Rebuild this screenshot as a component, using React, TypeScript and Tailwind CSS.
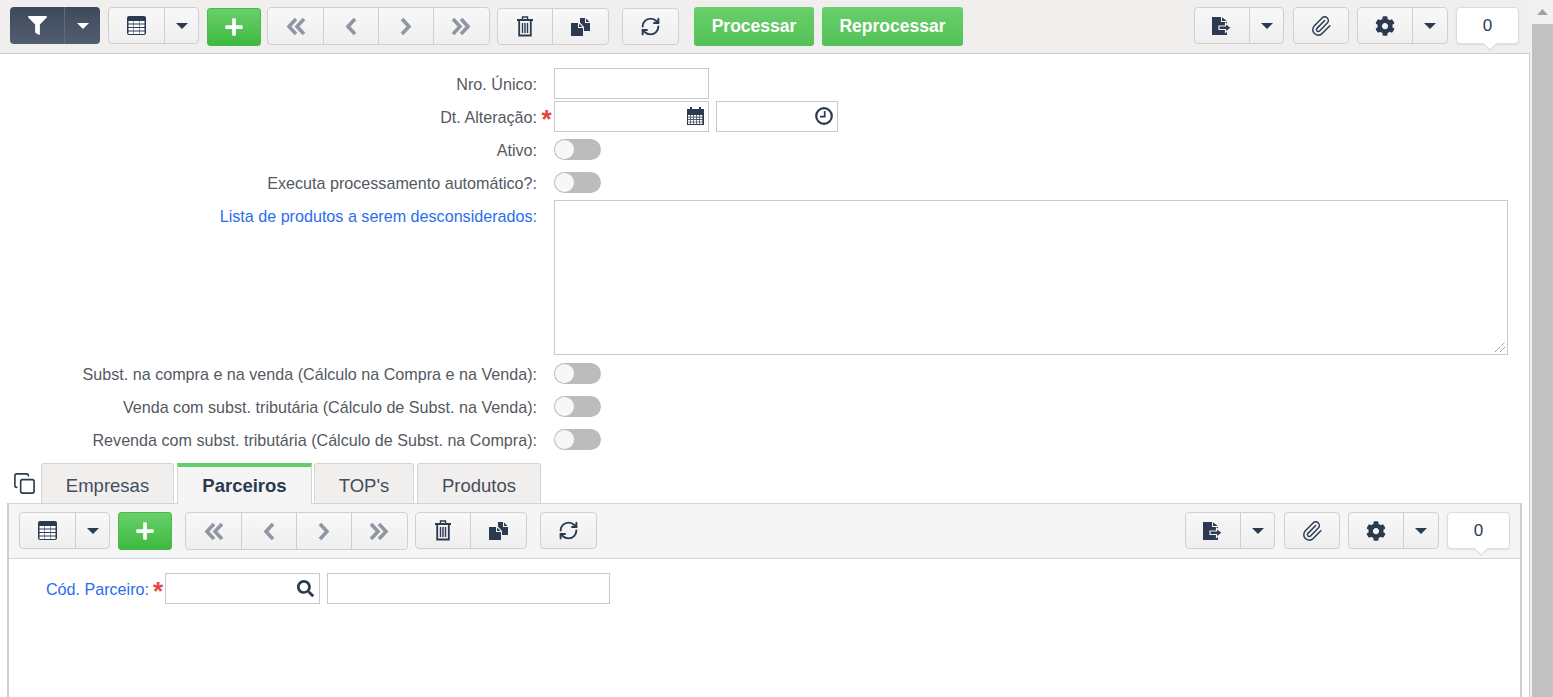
import type { ReactNode } from "react";
import { FaCog, FaFilter, FaPlus, FaSearch } from "react-icons/fa";
import { Copy, Paperclip, RefreshCw } from "lucide-react";

const navy = "#2b3a50";

function Caret({ color = navy }: { color?: string }) {
  return (
    <svg width="12" height="6" viewBox="0 0 12 6">
      <polygon points="0,0 12,0 6,6" fill={color} />
    </svg>
  );
}

function FilesIcon() {
  return (
    <svg width="19" height="18" viewBox="0 0 19 18" fill={navy}>
      <path d="M0 5h7v5h5v8H0z" />
      <path d="M8 5.5 11.5 9H8z" />
      <path d="M9 0h5v5h5v8h-6V9L9 4.5z" />
      <path d="M15 0.5 18.5 4H15z" />
    </svg>
  );
}

function TableIcon() {
  return (
    <svg width="19" height="19" viewBox="0 0 19 19">
      <rect x="0" y="0" width="19" height="19" rx="2" fill={navy} />
      {[5, 8.5, 12, 15.5].map((y) =>
        [1.5, 7, 12.5].map((x) => (
          <rect key={`${x}-${y}`} x={x} y={y} width="5" height="2.5" fill="#ffffff" />
        )),
      )}
    </svg>
  );
}

function TrashIcon() {
  return (
    <svg width="16" height="21" viewBox="0 0 16 21" fill="none" stroke={navy}>
      <path d="M5.5 3V1h5v2" strokeWidth="1.4" />
      <path d="M0 4h16" strokeWidth="2" />
      <path d="M2.2 5v14.5h11.6V5" strokeWidth="1.8" />
      <path d="M5.5 7v10M8 7v10M10.5 7v10" strokeWidth="1.4" />
    </svg>
  );
}

function ExportIcon() {
  return (
    <svg width="20" height="18" viewBox="0 0 20 18">
      <path d="M0 0h9v5h6v13H0z" fill={navy} />
      <path d="M10 0.3 14.7 4H10z" fill={navy} />
      <path d="M7 9h6.5V6.3l5.8 4.5-5.8 4.5v-2.8H7z" fill={navy} stroke="#f4f4f4" strokeWidth="1.2" />
    </svg>
  );
}

function CalendarIcon() {
  return (
    <svg className="-translate-y-px" width="17" height="18" viewBox="0 0 17 18">
      <path d="M0 2h3V0h2v2h7V0h2v2h3v5H0z" fill={navy} />
      <rect x="0" y="7" width="17" height="11" fill={navy} />
      {[8, 10.5, 13, 15.3].map((y) =>
        [1, 4, 7, 10, 13].map((x) => (
          <rect key={`${x}-${y}`} x={x} y={y} width="2.3" height="1.7" fill="#ffffff" />
        )),
      )}
    </svg>
  );
}

function ClockIcon() {
  return (
    <svg className="-translate-y-px" width="18" height="18" viewBox="0 0 18 18" fill="none" stroke={navy}>
      <circle cx="9" cy="9" r="7.8" strokeWidth="2.2" />
      <path d="M9.7 4v5.7H5" strokeWidth="1.7" />
    </svg>
  );
}

function Chevrons({ dir, double }: { dir: "left" | "right"; double?: boolean }) {
  const flip = dir === "right" ? "-scale-x-100" : "";
  return (
    <svg className={flip} width={double ? 21 : 14} height="19" viewBox={double ? "0 0 21 19" : "0 0 14 19"} fill="none" stroke="#8f97a3" strokeWidth="3.6">
      <path d="M11 2 4 9.5 11 17" />
      {double && <path d="M19 2 12 9.5 19 17" />}
    </svg>
  );
}

function Segment({ width, children }: { width: string; children: ReactNode }) {
  return (
    <div className={`flex h-full items-center justify-center border-r border-[#cfcfcf] last:border-r-0 ${width}`}>
      {children}
    </div>
  );
}

function Group({ className = "", children }: { className?: string; children: ReactNode }) {
  return (
    <div className={`flex h-[37px] items-center rounded-[4px] border border-[#d0d0d0] bg-gradient-to-b from-[#f8f8f8] to-[#efefef] ${className}`}>
      {children}
    </div>
  );
}

function PlusButton() {
  return (
    <div className="flex h-[38px] w-[54px] items-center justify-center rounded-[3px] border border-[#4cb84e] bg-gradient-to-b from-[#68cf6b] to-[#3cba3e]">
      <FaPlus size={20} color="#ffffff" />
    </div>
  );
}

function NavGroup() {
  return (
    <Group className="h-[38px]">
      <Segment width="w-[56px]"><Chevrons dir="left" double /></Segment>
      <Segment width="w-[55px]"><Chevrons dir="left" /></Segment>
      <Segment width="w-[55px]"><Chevrons dir="right" /></Segment>
      <Segment width="w-[55px]"><Chevrons dir="right" double /></Segment>
    </Group>
  );
}

function EditGroup() {
  return (
    <Group>
      <Segment width="w-[55px]"><TrashIcon /></Segment>
      <Segment width="w-[55px]"><FilesIcon /></Segment>
    </Group>
  );
}

function RefreshButton() {
  return (
    <Group className="w-[57px] justify-center">
      <RefreshCw size={21} color={navy} strokeWidth={2.2} />
    </Group>
  );
}

function TableGroup() {
  return (
    <Group>
      <Segment width="w-[56px]"><TableIcon /></Segment>
      <Segment width="w-[33px]"><Caret /></Segment>
    </Group>
  );
}

function RightTools() {
  return (
    <div className="ml-auto flex items-center">
      <Group>
        <Segment width="w-[55px]"><ExportIcon /></Segment>
        <Segment width="w-[33px]"><Caret /></Segment>
      </Group>
      <Group className="ml-[9px] w-[56px] justify-center">
        <Paperclip size={22} color={navy} strokeWidth={1.6} />
      </Group>
      <Group className="ml-[8px]">
        <Segment width="w-[55px]"><FaCog size={20} color={navy} /></Segment>
        <Segment width="w-[34px]"><Caret /></Segment>
      </Group>
      <div className="relative ml-[8px] flex h-[37px] w-[63px] items-center justify-center rounded-[4px] border border-[#dcdcdc] bg-white text-[17px] text-[#2b3a50] shadow-[0_1px_2px_rgba(0,0,0,0.08)]">
        0
        <div className="absolute bottom-[-6px] left-[28px] h-[10px] w-[10px] rotate-45 border-r border-b border-[#d6d6d6] bg-white" />
      </div>
    </div>
  );
}

function Toggle() {
  return (
    <div className="flex h-[21px] w-[47px] items-center rounded-full bg-[#bcbcbc] pl-[1px]">
      <div className="h-[19px] w-[19px] rounded-full bg-[#f7f7f7]" />
    </div>
  );
}

function Label({ children, blue }: { children: ReactNode; blue?: boolean }) {
  return (
    <div className={`w-[537px] shrink-0 pt-[1px] text-right text-[16.14px] leading-[20px] ${blue ? "text-[#2a6df0]" : "text-[#55595f]"}`}>
      {children}
    </div>
  );
}

function ToggleRow({ label }: { label: string }) {
  return (
    <div className="flex h-[33px] items-center">
      <Label>{label}</Label>
      <div className="ml-[17px]">
        <Toggle />
      </div>
    </div>
  );
}

const Star = () => (
  <span className="translate-x-[1px] translate-y-[2px] text-[26px] font-bold leading-[20px] text-[#e0483e]">*</span>
);

const inputCls = "h-[31px] border border-[#c9c9c9] bg-white";

function Tab({ label, width, active }: { label: string; width: string; active?: boolean }) {
  if (active) {
    return (
      <div className={`relative z-10 -mb-px flex h-[41px] items-center justify-center border-x border-[#d4d4d4] border-t-[4px] border-t-[#62cd66] bg-[#f5f5f5] text-[18.5px] font-bold text-[#2b3a50] ${width}`}>
        {label}
      </div>
    );
  }
  return (
    <div className={`flex h-[40px] items-center justify-center rounded-t-[3px] border border-b-0 border-[#d4d4d4] bg-[#f0efee] pt-[4px] text-[18.5px] text-[#444d5a] ${width}`}>
      {label}
    </div>
  );
}

export default function App() {
  return (
    <div className="flex h-[697px] w-full overflow-hidden bg-white font-['Liberation_Sans',Arial,sans-serif]">
      <main className="flex w-[1530px] shrink-0 flex-col">
        {/* TOP TOOLBAR */}
        <header className="relative z-10 flex h-[54px] shrink-0 items-start border-b border-[#cfcfcf] bg-[#f0efee] pt-[7px] pr-[11px] pl-[10px]">
          <div className="flex h-[37px] w-[90px] items-center rounded-[4px] bg-gradient-to-b from-[#3e4a5c] to-[#525d6f]">
            <div className="flex h-full w-[55px] items-center justify-center border-r border-[#5f6a7a]">
              <FaFilter size={19} color="#ffffff" />
            </div>
            <div className="flex flex-1 items-center justify-center">
              <Caret color="#ffffff" />
            </div>
          </div>
          <div className="ml-[8px]"><TableGroup /></div>
          <div className="ml-[8px] mt-[1px]"><PlusButton /></div>
          <div className="ml-[6px]"><NavGroup /></div>
          <div className="ml-[7px] mt-[1px]"><EditGroup /></div>
          <div className="ml-[13px] mt-[1px]"><RefreshButton /></div>
          <div className="ml-[15px] flex h-[39px] w-[120px] items-center justify-center rounded-[3px] bg-gradient-to-b from-[#68cf6b] to-[#54c158] text-[17.5px] font-bold text-white">
            Processar
          </div>
          <div className="ml-[8px] flex h-[39px] w-[141px] items-center justify-center rounded-[3px] bg-gradient-to-b from-[#68cf6b] to-[#54c158] text-[17.5px] font-bold text-white">
            Reprocessar
          </div>
          <RightTools />
        </header>

        {/* FORM */}
        <section className="flex flex-1 flex-col border-r border-[#cfcfcf] pt-[14px]">
          <div className="flex h-[31px] items-center">
            <Label>Nro. Único:</Label>
            <div className={`ml-[17px] w-[155px] ${inputCls}`} />
          </div>
          <div className="mt-[2px] flex h-[31px] items-center">
            <Label>Dt. Alteração:</Label>
            <div className="flex w-[17px] justify-center"><Star /></div>
            <div className={`flex w-[155px] items-center justify-end pr-[4px] ${inputCls}`}>
              <CalendarIcon />
            </div>
            <div className={`ml-[7px] flex w-[122px] items-center justify-end pr-[4px] ${inputCls}`}>
              <ClockIcon />
            </div>
          </div>
          <div className="mt-[1px]" />
          <ToggleRow label="Ativo:" />
          <ToggleRow label="Executa processamento automático?:" />
          <div className="mt-[1px] flex items-start">
            <div className="pt-[5px]">
              <Label blue>Lista de produtos a serem desconsiderados:</Label>
            </div>
            <div className="relative ml-[17px] h-[155px] w-[954px] border border-[#c9c9c9] bg-white">
              <svg className="absolute right-[1px] bottom-[1px]" width="12" height="12" viewBox="0 0 12 12">
                <path d="M1 11 11 1M6 11l5-5" stroke="#666" strokeWidth="1" strokeDasharray="1 1" />
              </svg>
            </div>
          </div>
          <div className="mt-[2px]" />
          <ToggleRow label="Subst. na compra e na venda (Cálculo na Compra e na Venda):" />
          <ToggleRow label="Venda com subst. tributária (Cálculo de Subst. na Venda):" />
          <ToggleRow label="Revenda com subst. tributária (Cálculo de Subst. na Compra):" />

          {/* TABS */}
          <div className="mt-[7px] flex h-[40px] items-end pl-[13px]">
            <div className="mb-[8px] mr-[5px] w-[23px]">
              <Copy size={23} color={navy} strokeWidth={1.7} />
            </div>
            <Tab label="Empresas" width="w-[133px]" />
            <div className="ml-[3px]"><Tab label="Parceiros" width="w-[135px]" active /></div>
            <div className="ml-[2px]"><Tab label="TOP's" width="w-[100px]" /></div>
            <div className="ml-[3px]"><Tab label="Produtos" width="w-[124px]" /></div>
          </div>

          {/* DETAIL PANEL */}
          <div className="ml-[7px] mr-[7px] flex flex-1 flex-col border-x-2 border-t border-x-[#cfcfcf] border-t-[#d4d4d4]">
            <div className="flex h-[55px] shrink-0 items-start border-b border-[#d4d4d4] bg-[#f5f5f5] pt-[8px] pr-[10px] pl-[10px]">
              <TableGroup />
              <div className="ml-[8px]"><PlusButton /></div>
              <div className="ml-[13px]"><NavGroup /></div>
              <div className="ml-[7px]"><EditGroup /></div>
              <div className="ml-[13px]"><RefreshButton /></div>
              <RightTools />
            </div>
            <div className="flex items-center pt-[14px]">
              <div className="w-[140px] pt-[1px] text-right text-[16.14px] leading-[20px] text-[#2a6df0]">Cód. Parceiro:</div>
              <div className="flex w-[16px] justify-center"><Star /></div>
              <div className={`flex w-[155px] items-center justify-end pr-[5px] ${inputCls}`}>
                <FaSearch size={17} color={navy} />
              </div>
              <div className={`ml-[7px] w-[283px] ${inputCls}`} />
            </div>
          </div>
        </section>
      </main>

      {/* SCROLLBAR */}
      <aside className="flex w-[23px] shrink-0 flex-col bg-[#f1f1f1]">
        <div className="flex h-[24px] items-center justify-center pl-[2px]">
          <svg width="11" height="6" viewBox="0 0 11 6">
            <polygon points="0,6 11,6 5.5,0" fill="#a3a3a3" />
          </svg>
        </div>
        <div className="ml-[2px] flex-1 bg-[#c1c1c1]" />
      </aside>
    </div>
  );
}
